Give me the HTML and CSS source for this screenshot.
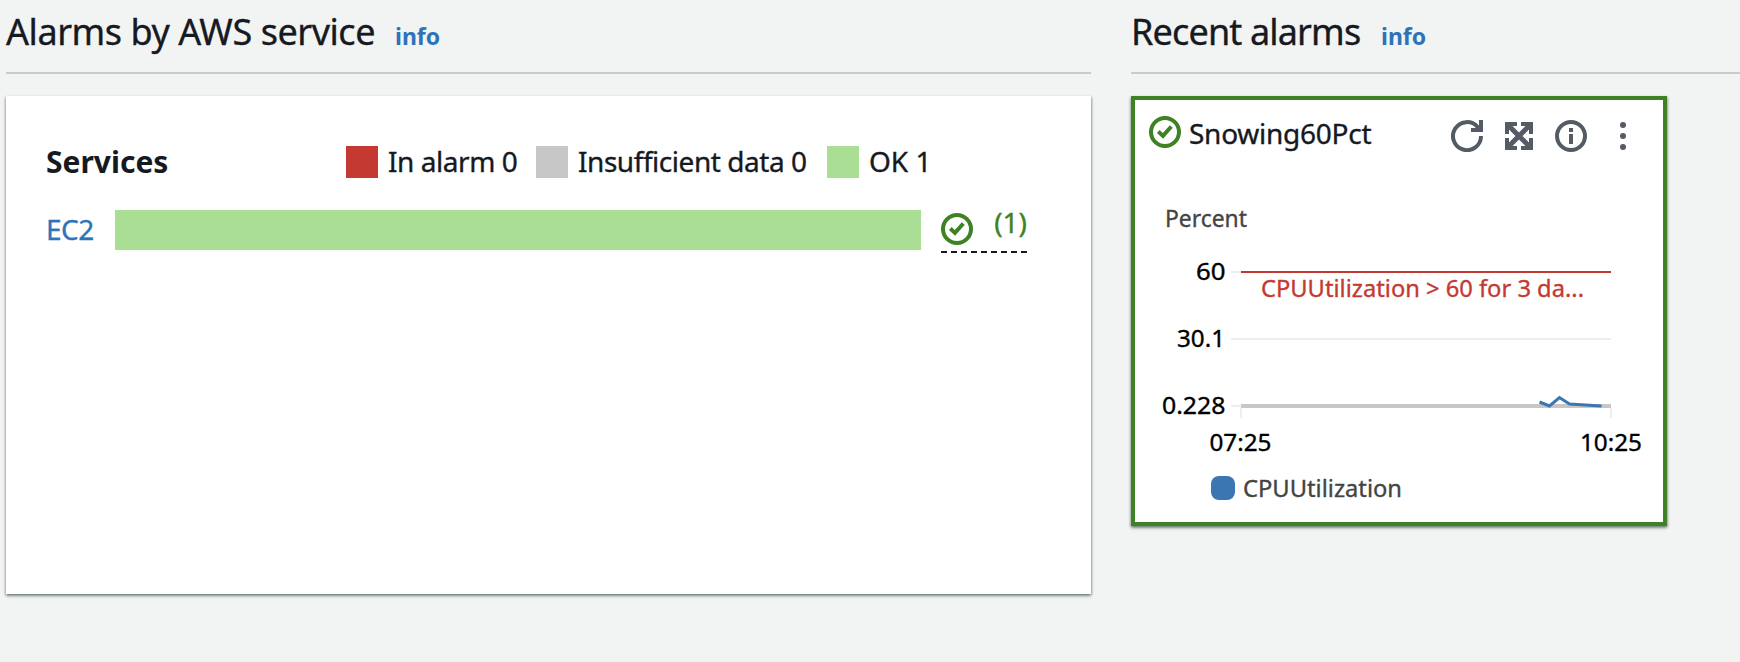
FILE: index.html
```html
<!DOCTYPE html>
<html lang="en">
<head>
<meta charset="utf-8">
<title>Alarms overview</title>
<link rel="stylesheet" href="styles.css">
</head>
<body>
<main class="overview">
  <section class="services-column">
    <header class="section-header">
      <h2 class="section-title title-services">Alarms by AWS service</h2>
      <a class="info-link">info</a>
    </header>
    <div class="card services-card">
      <div class="services-head">
        <h3 class="services-title">Services</h3>
        <div class="legend">
          <span class="swatch swatch-alarm"></span><span class="legend-text label-alarm">In alarm 0</span>
          <span class="swatch swatch-insufficient"></span><span class="legend-text label-insufficient">Insufficient data 0</span>
          <span class="swatch swatch-ok"></span><span class="legend-text label-ok">OK 1</span>
        </div>
      </div>
      <div class="service-row">
        <a class="service-name">EC2</a>
        <div class="service-bar"></div>
        <a class="service-status">
          <svg class="status-icon" width="32" height="32" viewBox="0 0 32 32" fill="none" stroke="currentColor" stroke-width="4"><circle cx="16" cy="16" r="14"/><path d="M9.3 15.5l4.7 4.4 8.3-9.4"/></svg>
          <span class="status-count">(1)</span>
        </a>
      </div>
    </div>
  </section>
  <section class="recent-column">
    <header class="section-header">
      <h2 class="section-title title-recent">Recent alarms</h2>
      <a class="info-link">info</a>
    </header>
    <article class="card alarm-card">
      <div class="alarm-head">
        <svg class="alarm-ok" width="32" height="32" viewBox="0 0 32 32" fill="none" stroke="currentColor" stroke-width="4"><circle cx="16" cy="16" r="14"/><path d="M9.3 15.5l4.7 4.4 8.3-9.4"/></svg>
        <span class="alarm-name">Snowing60Pct</span>
        <div class="alarm-tools">
          <svg width="32" height="32" viewBox="0 0 32 32" fill="none" stroke="currentColor" stroke-width="4"><path d="M30 16A14 14 0 1 1 26.8 7.2L28.5 9.5"/><path d="M30 0v10H20"/></svg>
          <svg width="28" height="28" viewBox="0 0 28 28" fill="none" stroke="currentColor" stroke-width="4"><path d="M2 12V2h10M16 2h10v10M26 16v10H16M12 26H2V16"/><path stroke-width="5" d="M3 3l22 22M25 3L3 25"/></svg>
          <svg width="32" height="32" viewBox="0 0 32 32"><circle cx="16" cy="16" r="14" fill="none" stroke="currentColor" stroke-width="4"/><path fill="currentColor" d="M14 8h4v4h-4zM14 14h4v10h-4z"/></svg>
          <svg width="6" height="28" viewBox="0 0 6 28" fill="currentColor"><circle cx="3" cy="3" r="3"/><circle cx="3" cy="14" r="3"/><circle cx="3" cy="25" r="3"/></svg>
        </div>
      </div>
      <svg class="chart" width="528" height="362" viewBox="1135 160 528 362">
        <text class="muted" x="1165" y="226.5" textLength="82" lengthAdjust="spacingAndGlyphs">Percent</text>
        <g class="grid">
          <path d="M1231 272h10M1231 339h380M1231 406h10M1241 408v10M1611 408v10"/>
        </g>
        <path class="threshold" d="M1241 272h370"/>
        <text class="threshold-label" x="1261" y="296.5" textLength="323" lengthAdjust="spacingAndGlyphs">CPUUtilization &gt; 60 for 3 da...</text>
        <text x="1196" y="279.7" textLength="29.5" lengthAdjust="spacingAndGlyphs">60</text>
        <text x="1177" y="346.7" textLength="48" lengthAdjust="spacingAndGlyphs">30.1</text>
        <text x="1162" y="413.7" textLength="63.5" lengthAdjust="spacingAndGlyphs">0.228</text>
        <path class="baseline" d="M1241 406h370"/>
        <path class="series" d="M1539.5 402l10 4 10-8.5 10 6.5 32 2"/>
        <text x="1209.5" y="450.7" textLength="62" lengthAdjust="spacingAndGlyphs">07:25</text>
        <text x="1580" y="450.7" textLength="62" lengthAdjust="spacingAndGlyphs">10:25</text>
        <rect class="marker" x="1211" y="476" width="24" height="24" rx="8"/>
        <text class="muted" x="1243" y="496.5" textLength="159" lengthAdjust="spacingAndGlyphs">CPUUtilization</text>
      </svg>
    </article>
  </section>
</main>
</body>
</html>
```
FILE: styles.css
```css
* { box-sizing: border-box; }
body {
  margin: 0;
  background: #f2f4f3;
  color: #16191f;
  font-family: "Noto Sans", "Open Sans", sans-serif;
  -webkit-text-stroke: 0.35px currentColor;
}
.overview {
  display: grid;
  grid-template-columns: 1085px 1fr;
  column-gap: 40px;
  height: 662px;
  padding-left: 6px;
  overflow: hidden;
}
h2, h3 { margin: 0; }
.section-header {
  display: flex;
  align-items: baseline;
  gap: 21px;
  height: 74px;
  margin-bottom: 22px;
  border-bottom: 2px solid #c9cccc;
  white-space: nowrap;
}
.section-title {
  font-size: 36px;
  line-height: 63px;
  font-weight: 400;
}
.title-services { width: 368px; letter-spacing: -0.45px; }
.title-recent { width: 229px; letter-spacing: -0.85px; }
.info-link {
  color: #2e73b8;
  font-size: 23px;
  font-weight: 700;
  -webkit-text-stroke: 0;
}
.card {
  background: #fff;
  box-shadow: 0 2px 3px rgba(0, 28, 36, 0.4), 1px 1px 2px rgba(0, 28, 36, 0.2), -1px 1px 2px rgba(0, 28, 36, 0.12);
}
.services-card { height: 498px; padding: 50px 64px 0 40px; }
.services-head {
  display: flex;
  height: 32px;
  line-height: 32px;
  white-space: nowrap;
}
.services-title { width: 300px; font-size: 30px; font-weight: 700; -webkit-text-stroke: 0; }
.legend { display: flex; font-size: 28px; letter-spacing: -0.45px; }
.swatch { width: 32px; height: 32px; margin-right: 10px; }
.swatch-alarm { background: #c43a33; }
.swatch-insufficient { background: #c7c7c7; }
.swatch-ok { background: #aade94; }
.legend-text { line-height: 31px; }
.label-alarm { width: 148px; }
.label-insufficient { width: 249px; }
.label-ok { letter-spacing: 0; }
.service-row {
  display: flex;
  height: 44px;
  margin-top: 32px;
}
.service-name { width: 69px; color: #2e73b8; font-size: 28px; line-height: 38px; letter-spacing: -0.5px; }
.service-bar { width: 806px; height: 40px; background: #aade94; }
.service-status {
  display: flex;
  justify-content: space-between;
  width: 86px;
  height: 43px;
  margin-left: 20px;
  padding-top: 3px;
  color: #3e8224;
  background: repeating-linear-gradient(90deg, #16191f 0 6px, transparent 6px 10px) bottom / 100% 2px no-repeat;
}
.status-count { margin-top: -3px; font-size: 28px; line-height: 25px; }
.alarm-card {
  width: 536px;
  height: 430px;
  border: 4px solid #3e8224;
}
.alarm-head { display: flex; height: 60px; padding: 16px 37px 0 14px; }
.alarm-ok { color: #3e8224; }
.alarm-name { margin-left: 8px; font-size: 28px; line-height: 34px; letter-spacing: -0.25px; }
.alarm-tools {
  display: flex;
  align-items: center;
  gap: 22px;
  height: 40px;
  margin-left: auto;
  color: #545b64;
}
.alarm-tools svg:last-child { margin-left: 11px; }
.chart { display: block; font-size: 23.5px; }
.chart text { fill: #000; stroke: none; }
.chart .muted { fill: #444; }
.chart .threshold-label { fill: #c43a33; }
.grid { stroke: #eee; stroke-width: 2; }
.threshold { stroke: #c43a33; stroke-width: 2; }
.baseline { stroke: #c7c7c7; stroke-width: 4; }
.series { fill: none; stroke: #3b76b2; stroke-width: 3; }
.marker { fill: #3b76b2; }
/* SVG labels take their extra weight from a stroke in the fill colour */
.chart text { stroke: #000; stroke-width: 0.35px; }
.chart .muted { stroke: #444; }
.chart .threshold-label { stroke: #c43a33; }
```
